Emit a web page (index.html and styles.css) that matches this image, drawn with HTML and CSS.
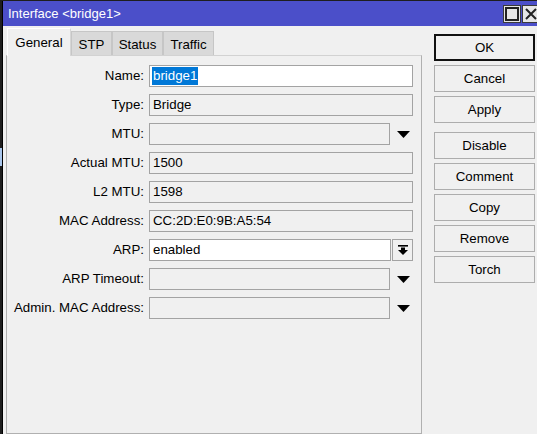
FILE: index.html
```html
<!DOCTYPE html>
<html>
<head>
<meta charset="utf-8">
<title>Interface &lt;bridge1&gt;</title>
<link rel="stylesheet" href="styles.css">
</head>
<body>
<div class="window">
  <div class="titlebar">
    <span class="title">Interface &lt;bridge1&gt;</span>
    <div class="wctrl">
      <span class="wbtn"><svg width="14" height="14" viewBox="0 0 14 14"><rect x="1" y="1" width="12" height="12" fill="none" stroke="#222" stroke-width="2"/></svg></span>
      <span class="wbtn"><svg width="14" height="14" viewBox="0 0 14 14"><path d="M2 2 L12 12 M12 2 L2 12" stroke="#222" stroke-width="2"/></svg></span>
    </div>
  </div>
  <div class="client">
    <div class="left">
      <div class="tabs">
        <div class="tab active w-general">General</div>
        <div class="tab w-stp">STP</div>
        <div class="tab w-status">Status</div>
        <div class="tab w-traffic">Traffic</div>
      </div>
      <div class="panel">
        <div class="form">
          <span class="lbl">Name:</span>
          <div class="field"><div class="input edit full"><span class="sel">bridge1</span></div></div>

          <span class="lbl">Type:</span>
          <div class="field"><div class="input full">Bridge</div></div>

          <span class="lbl">MTU:</span>
          <div class="field"><div class="input short"></div><span class="drop"><svg width="13" height="7" viewBox="0 0 13 7"><polygon points="0,0 13,0 6.5,7" fill="#000"/></svg></span></div>

          <span class="lbl">Actual MTU:</span>
          <div class="field"><div class="input full">1500</div></div>

          <span class="lbl">L2 MTU:</span>
          <div class="field"><div class="input full">1598</div></div>

          <span class="lbl">MAC Address:</span>
          <div class="field"><div class="input full">CC:2D:E0:9B:A5:54</div></div>

          <span class="lbl">ARP:</span>
          <div class="field"><div class="input edit arp">enabled</div><span class="sbtn"><svg width="10" height="10" viewBox="0 0 10 10"><rect x="0" y="0" width="10" height="1.6" fill="#000"/><rect x="3" y="2.5" width="4" height="3" fill="#000"/><polygon points="0,5 10,5 5,10" fill="#000"/></svg></span></div>

          <span class="lbl">ARP Timeout:</span>
          <div class="field"><div class="input short"></div><span class="drop"><svg width="13" height="7" viewBox="0 0 13 7"><polygon points="0,0 13,0 6.5,7" fill="#000"/></svg></span></div>

          <span class="lbl">Admin. MAC Address:</span>
          <div class="field"><div class="input short"></div><span class="drop"><svg width="13" height="7" viewBox="0 0 13 7"><polygon points="0,0 13,0 6.5,7" fill="#000"/></svg></span></div>
        </div>
      </div>
    </div>
    <div class="actions">
      <button class="btn default">OK</button>
      <button class="btn">Cancel</button>
      <button class="btn">Apply</button>
      <button class="btn sep">Disable</button>
      <button class="btn">Comment</button>
      <button class="btn">Copy</button>
      <button class="btn">Remove</button>
      <button class="btn">Torch</button>
    </div>
  </div>
</div>
</body>
</html>
```

FILE: styles.css
```css
html, body {
  margin: 0;
  padding: 0;
}
body {
  width: 537px;
  height: 434px;
  overflow: hidden;
  background: linear-gradient(#a9c6ec, #a9c6ec) no-repeat 0 148px / 2px 18px, #1e1e1e;
  font-family: "Liberation Sans", Arial, sans-serif;
  font-size: 13.3px;
  color: #000;
}
.window {
  margin-top: 1px;
  margin-left: 2px;
  border-left: 1px solid #000;
  width: 540px;
  height: 433px;
  background: #f0f0f0;
  display: flex;
  flex-direction: column;
}
.titlebar {
  height: 25px;
  flex: none;
  background: #4b4fc9;
  color: #fff;
  display: flex;
  align-items: center;
  padding: 0 3px 0 5px;
}
.title {
  font-size: 13px;
  line-height: 16px;
}
.wctrl {
  margin-left: auto;
  display: flex;
  gap: 1px;
  padding-top: 1px;
}
.wbtn {
  box-sizing: border-box;
  width: 18px;
  height: 18px;
  border: 1px solid #3a3a3a;
  background: #e6e6e6;
  display: flex;
  align-items: center;
  justify-content: center;
}
.client {
  flex: 1;
  display: flex;
  padding-top: 2px;
  min-height: 0;
}
.left {
  margin-left: 3px;
  width: 416px;
  display: flex;
  flex-direction: column;
}
.tabs {
  height: 27px;
  display: flex;
  align-items: flex-end;
  padding-left: 1px;
  position: relative;
  z-index: 1;
}
.tab {
  box-sizing: border-box;
  height: 24px;
  background: #d9d9d9;
  border: 1px solid #c6c6c6;
  border-bottom: none;
  display: flex;
  align-items: center;
  justify-content: center;
  padding-top: 2px;
}
.tab.active {
  height: 28px;
  margin-bottom: -1px;
  background: #f0f0f0;
  border-color: #d6d6d6;
  border-top-color: #fff;
  border-left-color: #fff;
  padding-top: 0;
}
.w-general { width: 64px; }
.w-stp { width: 41px; }
.w-status { width: 51px; }
.w-traffic { width: 51px; }
.panel {
  flex: 1;
  border: 1px solid #b0b0b0;
  border-top-color: #d2d2d2;
  background: #f0f0f0;
}
.form {
  display: grid;
  grid-template-columns: 137px 264px;
  column-gap: 5px;
  row-gap: 7px;
  padding-top: 9px;
}
.lbl {
  text-align: right;
  line-height: 22px;
  white-space: nowrap;
}
.field {
  display: flex;
  height: 22px;
}
.input {
  box-sizing: border-box;
  height: 22px;
  border: 1px solid #a3a3a3;
  background: #f0f0f0;
  padding-left: 3px;
  line-height: 20px;
  white-space: nowrap;
  display: flex;
  align-items: center;
}
.input.edit { background: #fff; }
.input.full { width: 264px; }
.input.short { width: 241px; }
.input.arp { width: 242px; }
.sel {
  background: #0078d7;
  color: #fff;
  line-height: 18px;
  padding: 0 1px;
  margin-left: -1px;
}
.drop {
  width: 23px;
  display: flex;
  align-items: center;
  padding-left: 7px;
  box-sizing: border-box;
}
.sbtn {
  box-sizing: border-box;
  margin-left: 1px;
  width: 21px;
  height: 22px;
  border: 1px solid #a3a3a3;
  background: #f0f0f0;
  display: flex;
  align-items: center;
  justify-content: center;
}
.actions {
  margin-left: 12px;
  padding-top: 6px;
  display: flex;
  flex-direction: column;
  gap: 4px;
}
.btn {
  box-sizing: border-box;
  width: 101px;
  height: 27px;
  border: 1px solid #adadad;
  background: #f0f0f0;
  font-family: "Liberation Sans", Arial, sans-serif;
  font-size: 13.3px;
  color: #000;
  padding: 0;
  margin: 0;
}
.btn.default {
  border: 2px solid #111;
}
.btn.sep {
  margin-top: 5px;
}
```
